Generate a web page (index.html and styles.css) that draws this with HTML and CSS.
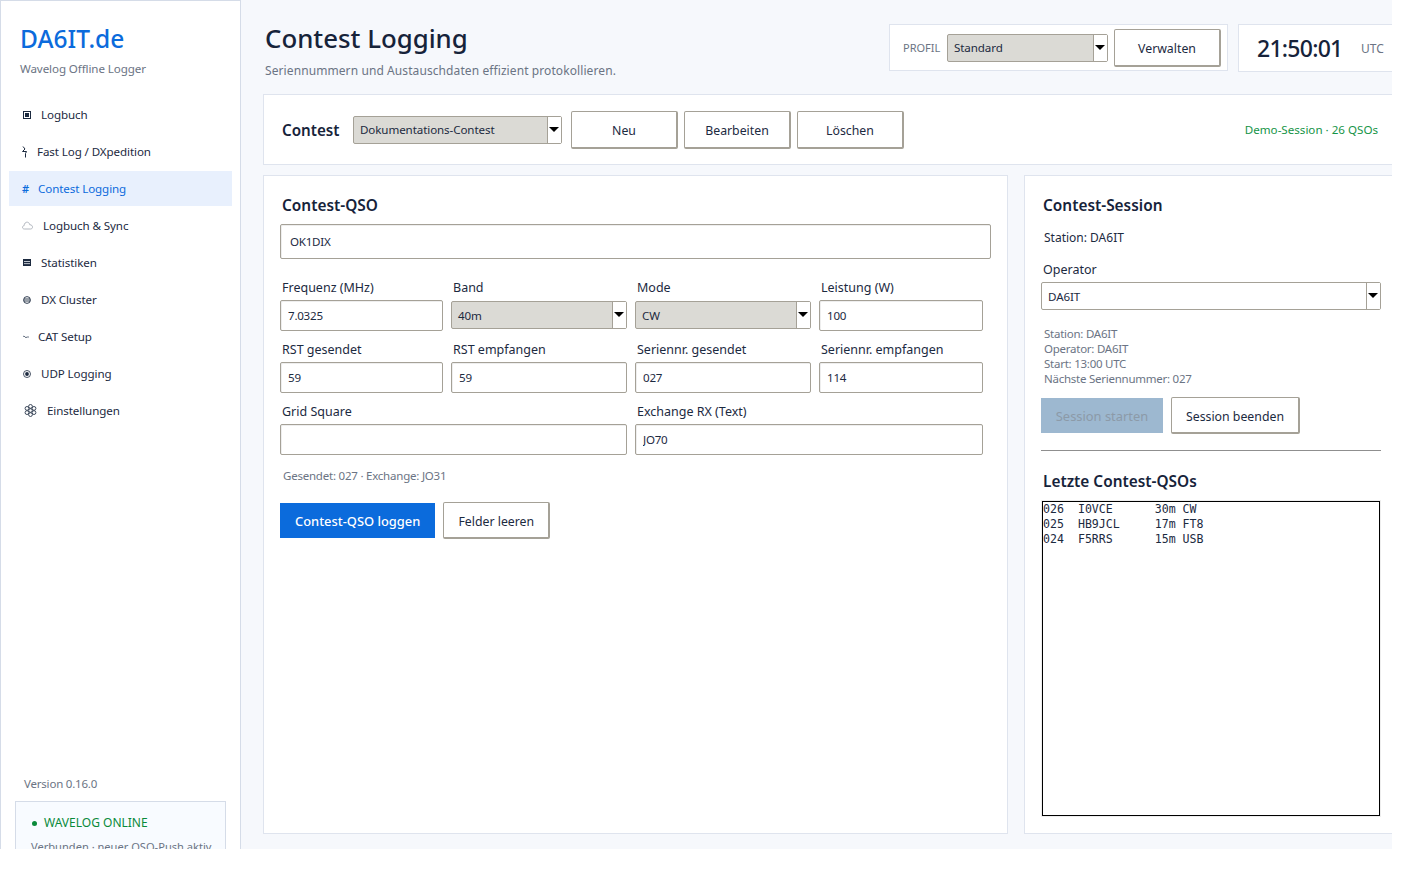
FILE: index.html
```html
<!DOCTYPE html>
<html lang="de">
<head>
    <meta charset="UTF-8">
    <meta name="viewport" content="width=device-width, initial-scale=1.0">
    <title>Contest Logging</title>
    <link rel="stylesheet" href="styles.css">
</head>
<body>
    <div class="app">
        <aside class="sidebar">
            <div class="logo">DA6IT.de</div>
            <div class="logo-sub">Wavelog Offline Logger</div>

            <nav class="nav">
                <a class="nav-item" href="#">
                    <svg class="icon" width="8" height="8" viewBox="0 0 8 8"><rect x="0.5" y="0.5" width="7" height="7" fill="none" stroke="#1c2a3f"/><rect x="2" y="2" width="4" height="4" fill="#1c2a3f"/></svg>
                    <span class="nav-label-10">Logbuch</span>
                </a>
                <a class="nav-item" href="#">
                    <svg class="icon icon-flush" width="6" height="12" viewBox="0 0 6 12"><path d="M1 0.5 L3 3 L0.5 5.5 H4.5 L3.5 7.5 V11.5" fill="none" stroke="#1c2a3f" stroke-width="1"/></svg>
                    <span class="nav-label-9">Fast Log / DXpedition</span>
                </a>
                <a class="nav-item nav-item-active" href="#">
                    <span class="icon-hash">#</span>
                    <span class="nav-label-9">Contest Logging</span>
                </a>
                <a class="nav-item" href="#">
                    <svg class="icon icon-flush" width="11" height="9" viewBox="0 0 11 9"><path d="M2.5 8 C0.8 8 0.3 6.8 0.6 5.8 C0.9 4.9 1.6 4.7 2.1 4.7 C2.2 2.6 3.6 0.8 5.5 1.2 C6.8 1.4 7.6 2.6 7.8 3.8 C9.4 3.6 10.6 4.8 10.5 6.3 C10.4 7.5 9.4 8 8.6 8 Z" fill="none" stroke="#aab0b9" stroke-width="0.9"/></svg>
                    <span class="nav-label-10">Logbuch &amp; Sync</span>
                </a>
                <a class="nav-item" href="#">
                    <svg class="icon" width="8" height="7" viewBox="0 0 8 7"><rect width="8" height="7" fill="#1c2a3f"/><rect x="1" y="2" width="6" height="0.8" fill="#e8ebf0"/><rect x="1" y="4.3" width="6" height="0.8" fill="#e8ebf0"/></svg>
                    <span class="nav-label-10">Statistiken</span>
                </a>
                <a class="nav-item" href="#">
                    <svg class="icon" width="8" height="8" viewBox="0 0 8 8"><circle cx="4" cy="4" r="3.4" fill="none" stroke="#1c2a3f" stroke-width="0.9"/><path d="M1 3 H7 M0.8 5 H7.2" stroke="#1c2a3f" stroke-width="0.9"/></svg>
                    <span class="nav-label-10">DX Cluster</span>
                </a>
                <a class="nav-item" href="#">
                    <svg class="icon" width="6" height="4" viewBox="0 0 6 4"><path d="M0 1.2 L2 1.6 L3 3 L3.6 2 H6" fill="none" stroke="#49566a" stroke-width="0.8"/></svg>
                    <span class="nav-label-9">CAT Setup</span>
                </a>
                <a class="nav-item" href="#">
                    <svg class="icon" width="8" height="8" viewBox="0 0 8 8"><circle cx="4" cy="4" r="3.5" fill="none" stroke="#1c2a3f" stroke-width="0.8"/><circle cx="4" cy="4" r="1.9" fill="#1c2a3f"/></svg>
                    <span class="nav-label-10">UDP Logging</span>
                </a>
                <a class="nav-item nav-item-wide" href="#">
                    <svg class="icon" width="13" height="13" viewBox="0 0 13 13"><g fill="none" stroke="#2c3a4e" stroke-width="0.9"><circle cx="6.5" cy="2.4" r="1.9"/><circle cx="10" cy="4.4" r="1.9"/><circle cx="10" cy="8.6" r="1.9"/><circle cx="6.5" cy="10.6" r="1.9"/><circle cx="3" cy="8.6" r="1.9"/><circle cx="3" cy="4.4" r="1.9"/><circle cx="6.5" cy="6.5" r="1.8"/></g></svg>
                    <span class="nav-label-10">Einstellungen</span>
                </a>
            </nav>

            <div class="sidebar-footer">
                <div class="version">Version 0.16.0</div>
                <div class="status-box">
                    <div class="status-line"><span class="status-dot"></span>WAVELOG ONLINE</div>
                    <div class="status-text">Verbunden · neuer QSO-Push aktiv</div>
                </div>
            </div>
        </aside>

        <main class="main">
            <header class="page-header">
                <div class="page-title">
                    <h1>Contest Logging</h1>
                    <p>Seriennummern und Austauschdaten effizient protokollieren.</p>
                </div>
                <div class="header-tools">
                    <div class="profile-box">
                        <span class="profile-label">PROFIL</span>
                        <div class="combo combo-profile"><span class="combo-value">Standard</span><span class="combo-arrow"></span></div>
                        <button class="btn btn-wide">Verwalten</button>
                    </div>
                    <div class="clock-box">
                        <span class="clock-time">21:50:01</span>
                        <span class="clock-zone">UTC</span>
                    </div>
                </div>
            </header>

            <section class="contest-bar">
                <span class="contest-label">Contest</span>
                <div class="combo combo-contest"><span class="combo-value">Dokumentations-Contest</span><span class="combo-arrow"></span></div>
                <div class="contest-actions">
                    <button class="btn btn-wide">Neu</button>
                    <button class="btn btn-wide">Bearbeiten</button>
                    <button class="btn btn-wide">Löschen</button>
                </div>
                <span class="contest-status">Demo-Session · 26 QSOs</span>
            </section>

            <div class="columns">
                <section class="card">
                    <h2 class="card-title">Contest-QSO</h2>
                    <input class="input input-call" type="text" value="OK1DIX">

                    <div class="qso-grid">
                        <div class="field">
                            <label>Frequenz (MHz)</label>
                            <input class="input" type="text" value="7.0325">
                        </div>
                        <div class="field">
                            <label>Band</label>
                            <div class="combo"><span class="combo-value">40m</span><span class="combo-arrow"></span></div>
                        </div>
                        <div class="field">
                            <label>Mode</label>
                            <div class="combo"><span class="combo-value">CW</span><span class="combo-arrow"></span></div>
                        </div>
                        <div class="field">
                            <label>Leistung (W)</label>
                            <input class="input" type="text" value="100">
                        </div>
                        <div class="field">
                            <label>RST gesendet</label>
                            <input class="input" type="text" value="59">
                        </div>
                        <div class="field">
                            <label>RST empfangen</label>
                            <input class="input" type="text" value="59">
                        </div>
                        <div class="field">
                            <label>Seriennr. gesendet</label>
                            <input class="input" type="text" value="027">
                        </div>
                        <div class="field">
                            <label>Seriennr. empfangen</label>
                            <input class="input" type="text" value="114">
                        </div>
                        <div class="field field-span">
                            <label>Grid Square</label>
                            <input class="input" type="text">
                        </div>
                        <div class="field field-span">
                            <label>Exchange RX (Text)</label>
                            <input class="input" type="text" value="JO70">
                        </div>
                    </div>

                    <p class="hint">Gesendet: 027 · Exchange: JO31</p>

                    <div class="form-actions">
                        <button class="btn-primary">Contest-QSO loggen</button>
                        <button class="btn btn-clear">Felder leeren</button>
                    </div>
                </section>

                <section class="card">
                    <h2 class="card-title">Contest-Session</h2>
                    <p class="station">Station: DA6IT</p>
                    <label class="operator-label">Operator</label>
                    <div class="combo combo-light"><span class="combo-value">DA6IT</span><span class="combo-arrow"></span></div>

                    <div class="session-info">
                        <div>Station: DA6IT</div>
                        <div>Operator: DA6IT</div>
                        <div>Start: 13:00 UTC</div>
                        <div>Nächste Seriennummer: 027</div>
                    </div>

                    <div class="form-actions session-actions">
                        <button class="btn-primary btn-disabled" disabled>Session starten</button>
                        <button class="btn btn-end">Session beenden</button>
                    </div>

                    <hr class="divider">

                    <h2 class="card-title recent-title">Letzte Contest-QSOs</h2>
                    <pre class="recent-list">026  I0VCE      30m CW
025  HB9JCL     17m FT8
024  F5RRS      15m USB</pre>
                </section>
            </div>
        </main>
    </div>
</body>
</html>
```

FILE: styles.css
```css
/* General Reset */
* { margin: 0; padding: 0; box-sizing: border-box; }
body { font-family: "Noto Sans", "Open Sans", Arial, sans-serif; font-size: 12px; color: #1c2a3f; background: #fff; }

.app { display: flex; width: 1392px; height: 849px; overflow: hidden; background: #f6f8fc; }

/* Sidebar */
.sidebar { flex: 0 0 241px; display: flex; flex-direction: column; background: #fff; border: 1px solid #d5dce8; border-bottom: none; padding: 0 8px; overflow: hidden; }
.logo { margin: 21px 0 0 11px; font-size: 24.5px; font-weight: 500; line-height: 34px; color: #0b6bdc; }
.logo-sub { margin: 4px 0 0 11px; font-size: 11.6px; letter-spacing: -0.1px; line-height: 18px; color: #6b7484; }
.nav { display: flex; flex-direction: column; gap: 2px; margin-top: 19px; }
.nav-item { display: flex; align-items: center; height: 35px; padding-left: 13px; font-size: 11.6px; letter-spacing: -0.1px; color: #1c2a3f; text-decoration: none; }
.nav-item .icon { margin-left: 1px; flex: none; }
.nav-item .icon-flush { margin-left: 0; }
.nav-item-wide .icon { margin-left: 2px; }
.nav-label-10 { margin-left: 10px; }
.nav-label-9 { margin-left: 9px; }
.nav-item-active { background: #e8f0fd; color: #0b6bdc; }
.icon-hash { width: 7px; font-size: 11px; font-weight: 600; line-height: 12px; }
.sidebar-footer { margin-top: auto; margin-bottom: -14px; }
.version { margin-left: 15px; font-size: 11.5px; letter-spacing: -0.2px; line-height: 18px; color: #6b7484; }
.status-box { margin: 8px 6px 0; height: 62px; padding: 12px 15px; background: #f8fbff; border: 1px solid #d5dce8; }
.status-line { display: flex; align-items: center; line-height: 18px; color: #0a8a3a; }
.status-dot { width: 5px; height: 5px; margin-right: 7px; margin-left: 1px; border-radius: 50%; background: #0a8a3a; }
.status-text { margin-top: 6px; font-size: 11.1px; line-height: 18px; color: #6b7484; white-space: nowrap; }

/* Main */
.main { flex: 1; min-width: 0; padding: 0 0 0 22px; overflow: hidden; }
.page-header { display: flex; justify-content: space-between; height: 94px; margin-right: -6px; padding-top: 24px; }
.page-title { padding-left: 2px; }
.page-title h1 { font-size: 25.8px; font-weight: 500; line-height: 28px; color: #16233a; }
.page-title p { margin-top: 10px; line-height: 17px; letter-spacing: 0.09px; color: #6b7484; }
.header-tools { display: flex; gap: 10px; align-items: flex-start; }
.profile-box { display: flex; align-items: center; height: 47px; padding: 0 6px 0 13px; background: #fff; border: 1px solid #dfe4ee; }
.profile-label { width: 44px; font-size: 11px; color: #6b7484; }
.clock-box { display: flex; align-items: center; width: 160px; height: 48px; padding-left: 18px; background: #fff; border: 1px solid #dfe4ee; }
.clock-time { width: 104px; font-size: 23px; font-weight: 500; letter-spacing: -0.75px; color: #16233a; }
.clock-zone { color: #6b7484; }

.contest-bar { display: flex; align-items: center; height: 71px; margin-right: -6px; padding: 0 19px 0 18px; background: #fff; border: 1px solid #dfe4ee; }
.contest-label { width: 71px; font-size: 15.2px; font-weight: 600; color: #16233a; }
.contest-actions { display: flex; gap: 6px; margin-left: 9px; }
.contest-status { margin-left: auto; font-size: 11.6px; color: #159447; }

.columns { display: grid; grid-template-columns: 745px 374px; gap: 16px; margin-top: 10px; }
.card { height: 659px; padding: 18px 16px 0; background: #fff; border: 1px solid #dfe4ee; }
.card-title { height: 22px; padding: 1px 0 0 2px; font-size: 15.4px; font-weight: 600; line-height: 22px; color: #16233a; }

/* Controls */
.input { display: block; width: 100%; height: 31px; padding: 0 7px; font: inherit; font-size: 11.6px; letter-spacing: -0.25px; color: #1c2a3f; background: #fff; border: 1px solid #a5a197; border-radius: 2px; box-shadow: inset 1px 1px 0 #eee; outline: none; }
.input-call { height: 35px; margin-top: 8px; padding: 0 9px 1px; }
.combo { display: flex; align-items: stretch; height: 28px; background: #dbdad5; border: 1px solid #a5a197; border-radius: 2px; }
.field .combo { margin-top: 5px; }
.combo-value { flex: 1; padding-left: 6px; font-size: 11.6px; letter-spacing: -0.1px; line-height: 27px; }
.combo-arrow { position: relative; flex: 0 0 14px; background: #fff; border-left: 1px solid #a5a197; }
.combo-arrow::after { content: ""; position: absolute; top: 10px; left: 1px; border: 5px solid transparent; border-top: 5px solid #000; border-bottom: none; }
.combo-profile { width: 161px; margin-right: 6px; }
.combo-profile .combo-value, .combo-contest .combo-value { line-height: 25px; }
.combo-contest { width: 209px; }
.combo-light { width: 340px; background: #fff; }
.btn { height: 38px; padding-top: 2px; font: inherit; font-size: 12.3px; color: #1c2a3f; background: #fff; border: 1px solid #a5a197; border-right-width: 2px; border-bottom-width: 2px; border-radius: 2px; }
.btn-wide { width: 107px; }
.btn-clear { width: 107px; height: 37px; }
.btn-end { width: 129px; height: 37px; }
.btn-primary { height: 35px; padding: 0 15px; font: inherit; font-size: 12.9px; font-weight: 500; color: #fff; background: #0b6bdc; border: none; }
.btn-disabled { width: 122px; padding: 0; font-weight: 400; color: #8c9aa8; background: #9db8d0; }

/* QSO form */
.qso-grid { display: grid; grid-template-columns: 163px 176px 176px 164px; gap: 9px 8px; margin-top: 19px; }
.field label { display: block; height: 18px; margin-bottom: 4px; padding: 1px 0 0 2px; line-height: 18px; font-size: 12.5px; }
.field-span { grid-column: span 2; }
.hint { margin-top: 12px; padding-left: 3px; font-size: 11.5px; letter-spacing: -0.22px; line-height: 18px; color: #6b7484; }
.form-actions { display: flex; align-items: center; gap: 8px; margin-top: 17px; }

/* Session card */
.station { margin-top: 13px; padding-left: 3px; line-height: 18px; }
.operator-label { display: block; height: 18px; margin-top: 13px; margin-bottom: 4px; padding: 1px 0 0 2px; font-size: 12.5px; line-height: 18px; }
.session-info { margin-top: 16px; padding-left: 3px; font-size: 11.5px; letter-spacing: -0.25px; line-height: 15px; color: #6b7484; }
.session-actions { margin-top: 11px; }
.divider { width: 340px; height: 1px; margin-top: 16px; border: none; background: #8f8f8f; }
.recent-title { margin-top: 19px; }
.recent-list { width: 338px; height: 315px; margin: 9px 0 0 1px; padding: 0; font-family: "DejaVu Sans Mono", monospace; font-size: 11.6px; line-height: 15px; border: 1px solid #000; box-shadow: 0 0 0 1px #eee; }
```
